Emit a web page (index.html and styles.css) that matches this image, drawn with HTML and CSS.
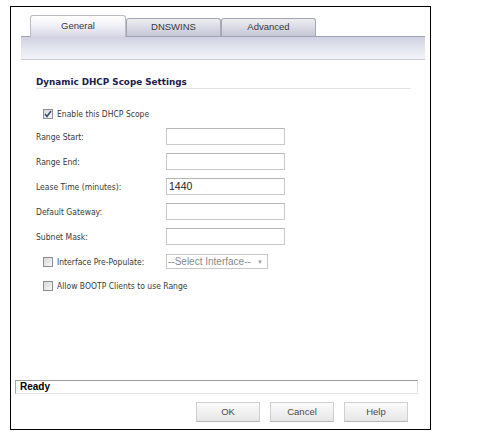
FILE: index.html
```html
<!DOCTYPE html>
<html>
<head>
<meta charset="utf-8">
<link rel="stylesheet" href="styles.css">
</head>
<body>
<div class="frame">
  <div class="tabs">
    <div class="tab active">General</div>
    <div class="tab">DNSWINS</div>
    <div class="tab">Advanced</div>
  </div>
  <div class="band"></div>
  <div class="content">
    <div class="heading">Dynamic DHCP Scope Settings</div>
    <div class="check-row first">
      <span class="cb"><svg width="8" height="8" viewBox="0 0 8 8"><path d="M1 4 L3 6.5 L7 1" fill="none" stroke="#3a4a6a" stroke-width="1.5"/></svg></span>
      <span class="check-label">Enable this DHCP Scope</span>
    </div>
    <div class="row first-field"><span class="label">Range Start:</span><span class="input"></span></div>
    <div class="row"><span class="label">Range End:</span><span class="input"></span></div>
    <div class="row"><span class="label">Lease Time (minutes):</span><span class="input value">1440</span></div>
    <div class="row"><span class="label">Default Gateway:</span><span class="input"></span></div>
    <div class="row"><span class="label">Subnet Mask:</span><span class="input"></span></div>
    <div class="row">
      <span class="label check-label-wrap"><span class="cb"></span><span class="check-label">Interface Pre-Populate:</span></span>
      <span class="select"><span class="select-text">--Select Interface--</span><span class="arrow">&#9660;</span></span>
    </div>
    <div class="check-row last">
      <span class="cb"></span>
      <span class="check-label">Allow BOOTP Clients to use Range</span>
    </div>
  </div>
  <div class="status">Ready</div>
  <div class="buttons">
    <div class="btn">OK</div>
    <div class="btn">Cancel</div>
    <div class="btn">Help</div>
  </div>
</div>
</body>
</html>
```
FILE: styles.css
```css
html, body {
  margin: 0;
  padding: 0;
  background: #fff;
}
.frame {
  box-sizing: border-box;
  width: 421px;
  height: 424px;
  margin: 6px 0 0 10px;
  border: 1px solid #000;
  display: flex;
  flex-direction: column;
  font-family: "DejaVu Sans", sans-serif;
}
.tabs {
  display: flex;
  align-items: flex-end;
  height: 21px;
  margin-top: 8px;
  padding-left: 19px;
}
.tab {
  box-sizing: border-box;
  width: 95px;
  height: 18px;
  border: 1px solid #a4a6b4;
  border-bottom: none;
  border-radius: 3px 3px 0 0;
  background: linear-gradient(#eeeef2, #c4c6d6);
  font-family: "Liberation Sans", Arial, sans-serif;
  font-size: 9.5px;
  color: #3a3a3a;
  text-align: center;
  line-height: 16px;
}
.tab.active {
  position: relative;
  z-index: 1;
  width: 96px;
  height: 22px;
  margin-bottom: -1px;
  border-color: #b8bac6;
  background: linear-gradient(#ffffff, #f4f4f8 40%, #d4d6e4);
  line-height: 19px;
}
.band {
  height: 22px;
  margin: 0 5px 0 10px;
  border-top: 1px solid #9ea2b2;
  border-bottom: 1px solid #c6ccdc;
  background: linear-gradient(#cfd1e2, #e6e8f0 60%, #f2f3f7);
}
.content {
  display: flex;
  flex-direction: column;
  padding-left: 25px;
  padding-right: 19px;
}
.heading {
  margin-top: 16px;
  font-weight: bold;
  font-size: 8.8px;
  line-height: 12px;
  color: #1c1c4c;
  border-bottom: 1px solid #e2e2e6;
}
.check-row {
  display: flex;
  align-items: center;
  height: 14px;
  padding-left: 7px;
}
.check-row.first {
  margin-top: 18px;
}
.check-row.last {
  margin-top: 9px;
}
.cb {
  box-sizing: border-box;
  width: 10px;
  height: 10px;
  border: 1px solid #8e8e94;
  background: linear-gradient(135deg, #d8d8dc, #f6f6f8);
  display: inline-flex;
  align-items: center;
  justify-content: center;
  margin-right: 4px;
  flex: none;
}
.check-label, .label {
  font-family: "DejaVu Sans Condensed", "DejaVu Sans", sans-serif;
  font-size: 8.5px;
  color: #3a3a3a;
}
.row {
  display: flex;
  align-items: center;
  height: 17px;
  margin-top: 8px;
}
.row.first-field {
  margin-top: 7px;
}
.label {
  width: 130px;
  flex: none;
}
.check-label-wrap {
  display: flex;
  align-items: center;
  padding-left: 7px;
  box-sizing: border-box;
}
.input {
  box-sizing: border-box;
  width: 119px;
  height: 17px;
  border: 1px solid #cacaca;
  border-top-color: #b6b6b6;
  background: #fff;
}
.input.value {
  font-family: "Liberation Sans", Arial, sans-serif;
  font-size: 10.5px;
  color: #222;
  line-height: 15px;
  padding-left: 2px;
}
.select {
  box-sizing: border-box;
  width: 102px;
  height: 15px;
  border: 1px solid #c8c8c8;
  display: flex;
  align-items: center;
  justify-content: space-between;
  padding: 0 4px 0 1px;
  font-family: "Liberation Sans", Arial, sans-serif;
  font-size: 10px;
  color: #8a8a8a;
  white-space: nowrap;
  overflow: hidden;
}
.select-text {
  line-height: 13px;
}
.arrow {
  font-size: 6px;
  color: #a0a0a0;
}
.status {
  box-sizing: border-box;
  margin: auto 12px 0 4px;
  height: 14px;
  border: 1px solid #e2e2e2;
  border-top-color: #9c9c9c;
  border-left-color: #a8a8a8;
  font-family: "Liberation Sans", Arial, sans-serif;
  font-weight: bold;
  font-size: 10px;
  line-height: 12px;
  color: #000;
  padding-left: 4px;
}
.buttons {
  display: flex;
  justify-content: flex-end;
  gap: 10px;
  margin: 8px 22px 7px 0;
}
.btn {
  box-sizing: border-box;
  width: 64px;
  height: 20px;
  border: 1px solid #d0d0d0;
  border-bottom-color: #b8b8b8;
  background: linear-gradient(#fbfbfb, #e6e6e6);
  font-family: "Liberation Sans", Arial, sans-serif;
  font-size: 9.5px;
  color: #4a4a4a;
  text-align: center;
  line-height: 18px;
}
```
